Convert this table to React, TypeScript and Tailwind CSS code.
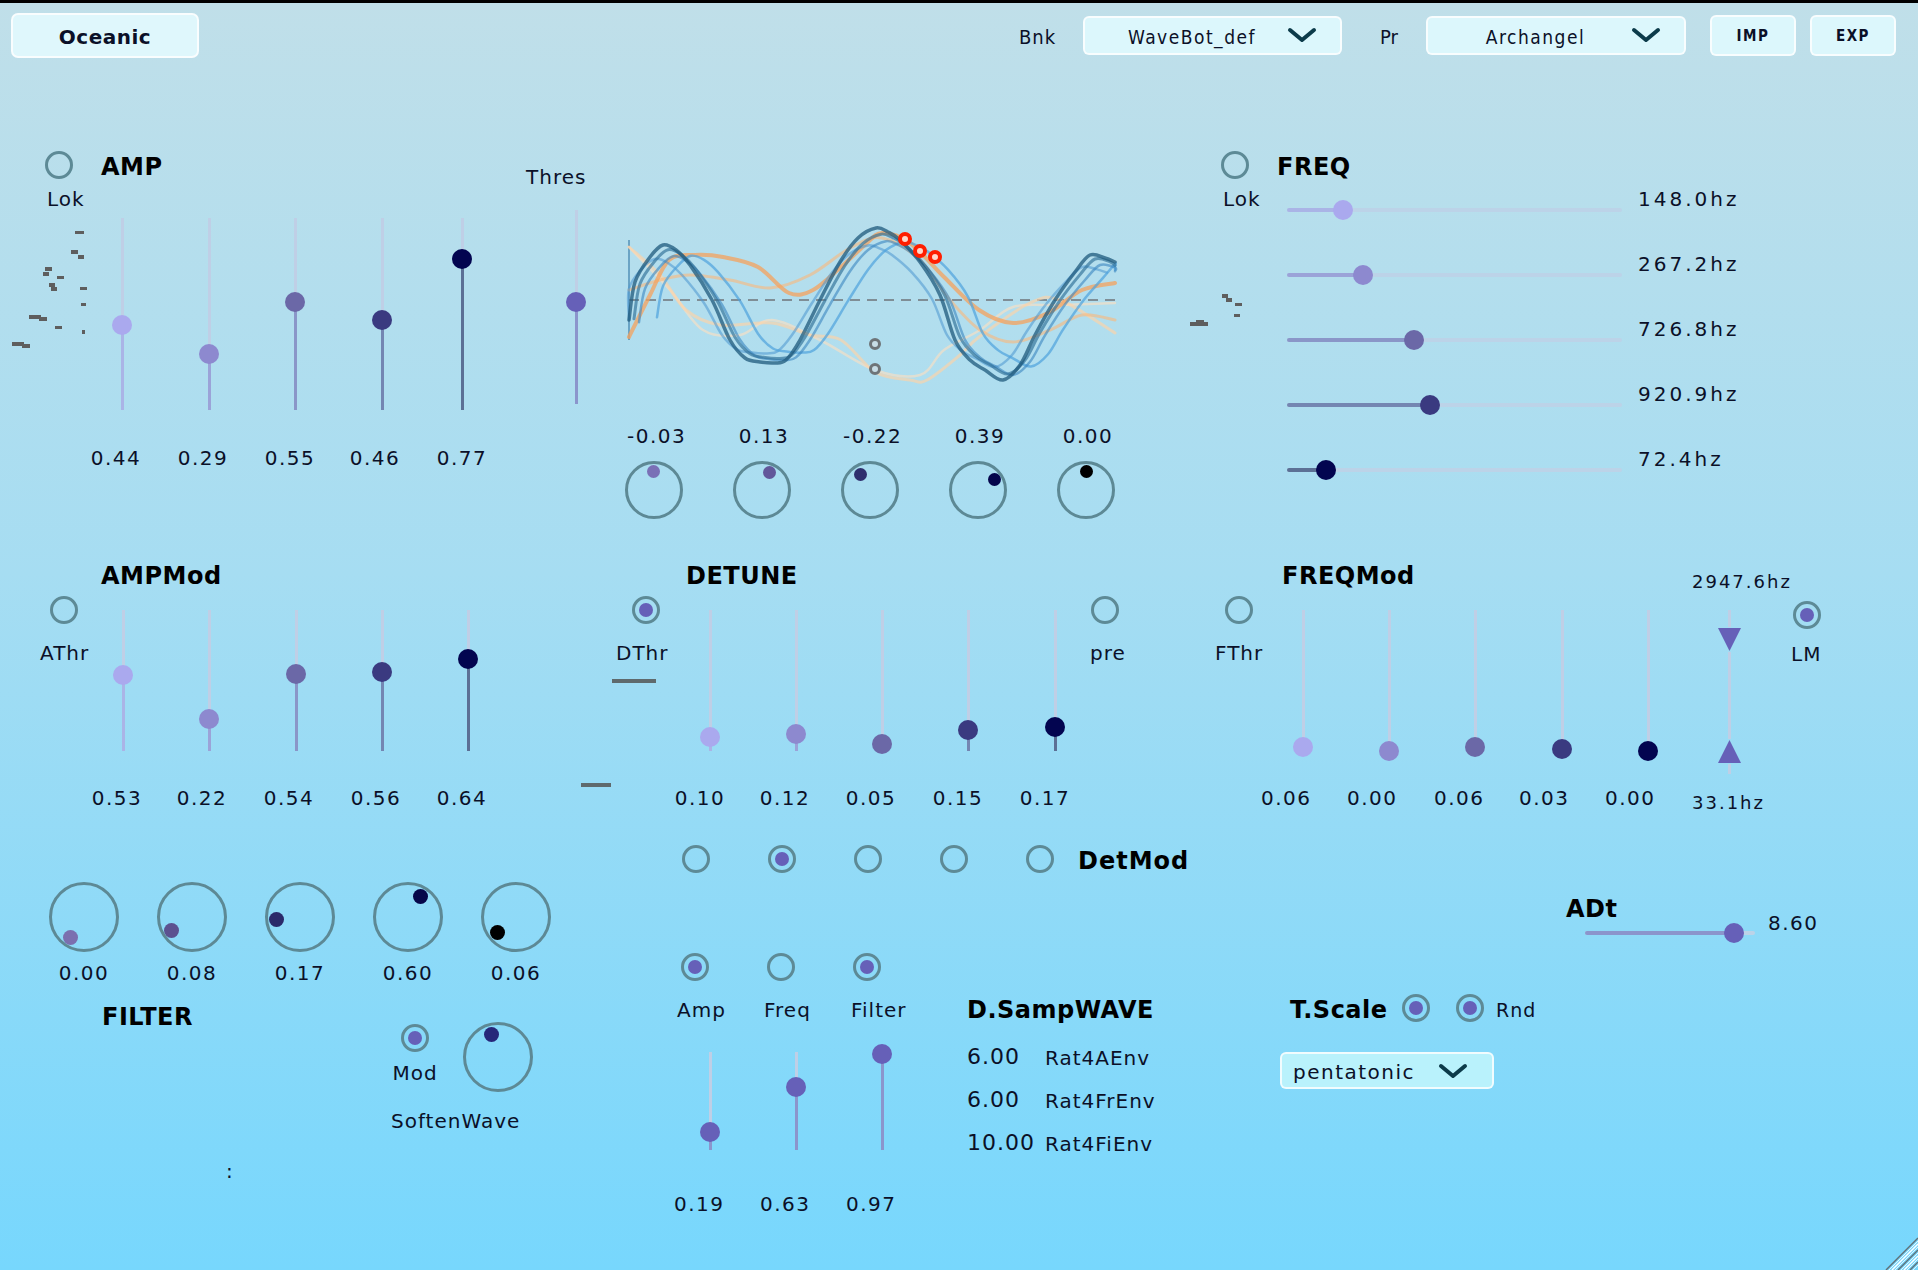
import React from 'react';

const LBL = 'relative top-[1px] text-[20px] leading-[24px] tracking-[1px] whitespace-nowrap';
const NUM = 'relative top-[1px] text-[20px] leading-[24px] tracking-[1.5px] whitespace-nowrap';
const HEAD = 'relative top-[2px] text-[24px] leading-[28px] font-bold text-black tracking-[0.5px] whitespace-nowrap';
const COND = "font-['DejaVu_Sans_Condensed','DejaVu_Sans',sans-serif]";

const THUMB = ['bg-[#aaa9ee]', 'bg-[#8d89cf]', 'bg-[#6b68a7]', 'bg-[#3a3a80]', 'bg-[#030550]'];
const FILL = ['bg-[#aab4e6]', 'bg-[#9ba3d8]', 'bg-[#8a96c8]', 'bg-[#7486b2]', 'bg-[#5c7095]'];

function Radio({ on = false, className = '' }: { on?: boolean; className?: string }) {
  return (
    <div className={`w-[28px] h-[28px] shrink-0 rounded-full border-[3px] border-[#5d8a96] flex items-center justify-center ${className}`}>
      {on && <div className="w-[14px] h-[14px] rounded-full bg-[#6660b8]" />}
    </div>
  );
}

function VSlider({ len, at, thumb = 'bg-[#6660b8]', fill = 'bg-[#8b95cc]', className = '' }: { len: number; at: number; thumb?: string; fill?: string; className?: string }) {
  return (
    <div className={`relative w-[20px] shrink-0 ${className}`} style={{ height: len }}>
      <div className="absolute left-[8.5px] top-0 w-[3px] h-full bg-[#bfcfe6]" />
      <div className={`absolute left-[8.5px] bottom-0 w-[3px] ${fill}`} style={{ height: Math.max(0, len - at) }} />
      <div className={`absolute left-0 w-[20px] h-[20px] rounded-full ${thumb}`} style={{ top: at - 10 }} />
    </div>
  );
}

function HSlider({ len, at, thumb = 'bg-[#6660b8]', fill = 'bg-[#8b95cc]', className = '' }: { len: number; at: number; thumb?: string; fill?: string; className?: string }) {
  return (
    <div className={`relative h-[20px] shrink-0 ${className}`} style={{ width: len }}>
      <div className="absolute top-[8px] left-0 h-[4px] w-full rounded-full bg-[#bcd3e8]" />
      <div className={`absolute top-[8px] left-0 h-[4px] rounded-full ${fill}`} style={{ width: at }} />
      <div className={`absolute top-0 w-[20px] h-[20px] rounded-full ${thumb}`} style={{ left: at - 10 }} />
    </div>
  );
}

function Knob({ big = false, dx, dy, dot, className = '' }: { big?: boolean; dx: number; dy: number; dot: string; className?: string }) {
  const size = big ? 70 : 58;
  const d = big ? 15 : 13;
  return (
    <div className={`relative shrink-0 rounded-full border-[3px] border-[#5d8995] ${big ? 'w-[70px] h-[70px]' : 'w-[58px] h-[58px]'} ${className}`}>
      <span
        className={`absolute rounded-full ${dot} ${big ? 'w-[15px] h-[15px]' : 'w-[13px] h-[13px]'}`}
        style={{ left: size / 2 - 3 + dx - d / 2, top: size / 2 - 3 + dy - d / 2 }}
      />
    </div>
  );
}

function Chevron() {
  return (
    <svg width="30" height="16" viewBox="0 0 30 16" className="shrink-0">
      <path d="M3 3 L15 13 L27 3" fill="none" stroke="#0c3b4a" strokeWidth="4" strokeLinecap="round" strokeLinejoin="round" />
    </svg>
  );
}

function Dropdown({ label, className = '' }: { label: string; className?: string }) {
  return (
    <div className={`h-[39px] rounded-[6px] bg-[#dcf7fc] border-2 border-white/80 flex items-center ${className}`}>
      <span className={`relative top-[2px] flex-1 text-center pl-[12px] text-[19px] tracking-[1.5px] ${COND}`}>{label}</span>
      <span className="mr-[23px]"><Chevron /></span>
    </div>
  );
}

function Btn({ children, className = '' }: { children: React.ReactNode; className?: string }) {
  return (
    <div className={`w-[86px] h-[41px] rounded-[6px] bg-[#dcf7fc] border-2 border-white/80 flex items-center justify-center text-[15px] font-bold tracking-[1.5px] ${COND} ${className}`}>
      <span className="relative top-[1px]">{children}</span>
    </div>
  );
}

function smooth(pts: number[][]) {
  let d = `M${pts[0][0]},${pts[0][1]}`;
  for (let i = 0; i < pts.length - 1; i++) {
    const p0 = pts[i - 1] || pts[i];
    const p1 = pts[i];
    const p2 = pts[i + 1];
    const p3 = pts[i + 2] || p2;
    const c1 = [p1[0] + (p2[0] - p0[0]) / 6, p1[1] + (p2[1] - p0[1]) / 6];
    const c2 = [p2[0] - (p3[0] - p1[0]) / 6, p2[1] - (p3[1] - p1[1]) / 6];
    d += ` C${c1[0].toFixed(1)},${c1[1].toFixed(1)} ${c2[0].toFixed(1)},${c2[1].toFixed(1)} ${p2[0]},${p2[1]}`;
  }
  return d;
}

const MAIN = [[9,100],[15,62],[30,37],[43,25],[56,30],[70,45],[92,80],[110,120],[125,138],[140,142],[155,143],[166,140],[180,120],[200,80],[220,42],[238,18],[256,8],[268,12],[280,20],[300,42],[320,75],[335,120],[350,140],[365,150],[383,160],[400,145],[415,115],[435,80],[455,52],[470,35],[485,38],[495,42]];

const BLUES = [
  { dx: -8, s: 0.8, dy: 2, c: '#4a96cf', w: 2.5, o: 0.55 },
  { dx: 28, s: 0.82, dy: 0, c: '#4fa2dd', w: 2.5, o: 0.7 },
  { dx: 10, s: 0.88, dy: 4, c: '#3a86c0', w: 2.5, o: 0.6 },
  { dx: 5, s: 0.92, dy: 0, c: '#2e6f96', w: 3, o: 0.65 },
  { dx: 0, s: 1, dy: 0, c: '#1f5a7c', w: 3.5, o: 0.75 },
];

const ORANGES = [
  { c: '#ffe0c0', w: 2.5, o: 0.6, p: [[9,27],[50,70],[83,110],[120,115],[152,100],[200,120],[255,150],[300,155],[324,130],[360,110],[393,87],[440,85],[495,83]] },
  { c: '#ffd3a6', w: 3, o: 0.65, p: [[9,27],[40,55],[66,90],[100,105],[152,103],[190,115],[221,120],[255,152],[290,160],[307,160],[340,135],[359,117],[410,83],[440,80],[495,113]] },
  { c: '#fbb77a', w: 3, o: 0.6, p: [[9,70],[40,60],[70,55],[110,60],[150,68],[190,55],[230,28],[262,18],[300,40],[330,80],[360,110],[393,122],[430,110],[462,95],[495,100]] },
  { c: '#f6a25c', w: 4, o: 0.75, p: [[9,117],[30,75],[49,40],[75,35],[103,37],[138,47],[169,73],[193,70],[221,47],[245,25],[262,13],[290,23],[324,57],[359,90],[393,103],[428,93],[462,70],[495,63]] },
];

function Wave({ className = '' }: { className?: string }) {
  return (
    <svg width="500" height="170" viewBox="0 0 500 170" className={className}>
      <line x1="9" y1="80" x2="495" y2="80" stroke="#7f8e96" strokeWidth="2" strokeDasharray="10 7" />
      <line x1="9" y1="20" x2="9" y2="120" stroke="#3b7eab" strokeWidth="2" opacity="0.6" />
      {ORANGES.map((l, i) => (
        <path key={'o' + i} d={smooth(l.p)} fill="none" stroke={l.c} strokeWidth={l.w} opacity={l.o} strokeLinecap="round" />
      ))}
      {BLUES.map((b, i) => {
        const pts = MAIN.map(([x, y]) => [Math.min(495, Math.max(9, x + b.dx)), +(85 + (y - 85) * b.s + b.dy).toFixed(1)]);
        return <path key={'b' + i} d={smooth(pts)} fill="none" stroke={b.c} strokeWidth={b.w} opacity={b.o} strokeLinecap="round" />;
      })}
      {[[285, 19], [300, 31], [315, 37]].map(([x, y], i) => (
        <circle key={'r' + i} cx={x} cy={y} r="5" fill="#ffd8cc" stroke="#ff1e00" strokeWidth="4" />
      ))}
      <circle cx="255" cy="124" r="4.5" fill="#c8dde6" stroke="#6e7478" strokeWidth="3" />
      <circle cx="255" cy="149" r="4.5" fill="#c8dde6" stroke="#6e7478" strokeWidth="3" />
    </svg>
  );
}

function Meter({ rects, w, h, className = '' }: { rects: number[][]; w: number; h: number; className?: string }) {
  return (
    <svg width={w} height={h} className={className}>
      {rects.map(([x, y, rw, rh], i) => (
        <rect key={i} x={x} y={y} width={rw} height={rh} fill="#5e5e5e" />
      ))}
    </svg>
  );
}

const AMP_METER = [[70,9,9,3],[66,28,7,4],[73,33,6,4],[40,45,7,4],[38,50,6,4],[52,54,7,3],[44,61,6,4],[46,65,6,4],[75,65,7,3],[76,81,5,3],[24,93,12,4],[34,95,8,4],[50,104,7,3],[77,108,3,4],[7,120,12,4],[17,122,8,4]];
const FREQ_METER = [[35,2,6,4],[39,6,6,4],[48,11,7,3],[47,22,6,3],[3,30,18,4],[9,28,8,3]];

function Tri({ up = false }: { up?: boolean }) {
  return (
    <svg width="25" height="25" viewBox="0 0 25 25" className="shrink-0">
      <polygon points={up ? '12.5,1 24,24 1,24' : '1,1 24,1 12.5,24'} fill="#6660b8" />
    </svg>
  );
}

function TopBar() {
  return (
    <div className="h-[64px] flex items-center pl-[11px] pr-[22px]">
      <div className="w-[188px] h-[45px] rounded-[7px] bg-[#dff7fc] border-2 border-white/80 flex items-center justify-center text-[20px] font-bold tracking-[0.5px]">
        <span className="relative top-[2px]">Oceanic</span>
      </div>
      <div className="ml-auto flex items-center">
        <span className={`relative top-[2px] w-[40px] text-[20px] tracking-[1px] ${COND}`}>Bnk</span>
        <Dropdown label="WaveBot_def" className="ml-[24px] w-[259px]" />
        <span className={`relative top-[2px] ml-[38px] w-[23px] text-[20px] ${COND}`}>Pr</span>
        <Dropdown label="Archangel" className="ml-[23px] w-[260px]" />
        <Btn className="ml-[24px]">IMP</Btn>
        <Btn className="ml-[14px]">EXP</Btn>
      </div>
    </div>
  );
}

function Row1() {
  const amp = [107, 136, 84, 102, 41];
  const ampMl = ['ml-[26px]', 'ml-[67px]', 'ml-[66px]', 'ml-[67px]', 'ml-[60px]'];
  const ampVals = ['0.44', '0.29', '0.55', '0.46', '0.77'];
  const valMl = ['ml-0', 'ml-[27px]', 'ml-[27px]', 'ml-[25px]', 'ml-[27px]'];
  const knobs = [
    { v: '-0.03', dx: -1, dy: -19, dot: 'bg-[#7a70b6]' },
    { v: '0.13', dx: 7, dy: -18, dot: 'bg-[#62579a]' },
    { v: '-0.22', dx: -10, dy: -16, dot: 'bg-[#2f2f6e]' },
    { v: '0.39', dx: 16, dy: -11, dot: 'bg-[#05064c]' },
    { v: '0.00', dx: 0, dy: -19, dot: 'bg-black' },
  ];
  const freq = [
    { at: 56, v: '148.0hz' },
    { at: 76, v: '267.2hz' },
    { at: 127, v: '726.8hz' },
    { at: 143, v: '920.9hz' },
    { at: 39, v: '72.4hz' },
  ];
  return (
    <div className="mt-[84px] h-[409px] flex items-start">
      {/* AMP */}
      <div className="w-[600px] shrink-0 flex items-start">
        <div className="w-[86px] shrink-0 flex flex-col items-start">
          <Radio className="ml-[45px]" />
          <span className={`ml-[47px] mt-[7px] ${LBL}`}>Lok</span>
          <Meter rects={AMP_METER} w={90} h={130} className="ml-[5px] mt-[12px]" />
        </div>
        <div className="w-[434px] shrink-0 flex flex-col items-start">
          <span className={`ml-[15px] ${HEAD}`}>AMP</span>
          <div className="mt-[39px] flex items-start">
            {amp.map((a, i) => (
              <VSlider key={i} len={192} at={a} thumb={THUMB[i]} fill={FILL[i]} className={ampMl[i]} />
            ))}
          </div>
          <div className="mt-[35px] flex">
            {ampVals.map((v, i) => (
              <span key={i} className={`w-[60px] text-center ${NUM} ${valMl[i]}`}>{v}</span>
            ))}
          </div>
        </div>
        <div className="flex flex-col items-start">
          <span className={`ml-[6px] mt-[13px] ${LBL}`}>Thres</span>
          <VSlider len={194} at={92} className="ml-[46px] mt-[22px]" />
        </div>
      </div>

      {/* Wave */}
      <div className="w-[580px] shrink-0 flex flex-col items-start">
        <Wave className="ml-[20px] mt-[69px]" />
        <div className="ml-[27px] mt-[33px] flex gap-[50px]">
          {knobs.map((k, i) => (
            <span key={i} className={`w-[58px] text-center ${NUM} text-[19px]`}>{k.v}</span>
          ))}
        </div>
        <div className="ml-[25px] mt-[14px] flex gap-[50px]">
          {knobs.map((k, i) => (
            <Knob key={i} dx={k.dx} dy={k.dy} dot={k.dot} />
          ))}
        </div>
      </div>

      {/* FREQ */}
      <div className="flex-1 flex flex-col items-start">
        <div className="flex items-center">
          <Radio className="ml-[41px]" />
          <span className={`ml-[28px] ${HEAD}`}>FREQ</span>
        </div>
        <div className="mt-[7px] flex items-start">
          <div className="w-[107px] shrink-0 flex flex-col items-start">
            <span className={`ml-[43px] ${LBL}`}>Lok</span>
            <Meter rects={FREQ_METER} w={56} h={36} className="ml-[7px] mt-[82px]" />
          </div>
          <div className="flex flex-col">
            {freq.map((f, i) => (
              <div key={i} className="h-[65px] flex items-start">
                <HSlider len={335} at={f.at} thumb={THUMB[i]} fill={FILL[i]} className="mt-[14px]" />
                <span className="relative top-[1px] ml-[16px] text-[20px] leading-[24px] tracking-[3px] whitespace-nowrap">{f.v}</span>
              </div>
            ))}
          </div>
        </div>
      </div>
    </div>
  );
}

function Row2() {
  const ampMod = [65, 109, 64, 62, 49];
  const ampModMl = ['ml-[27px]', 'ml-[66px]', 'ml-[67px]', 'ml-[66px]', 'ml-[66px]'];
  const ampModVals = ['0.53', '0.22', '0.54', '0.56', '0.64'];
  const ampModValMl = ['ml-[1px]', 'ml-[25px]', 'ml-[27px]', 'ml-[27px]', 'ml-[26px]'];

  const det = [127, 124, 134, 120, 117];
  const detMl = ['ml-[30px]', 'ml-[66px]', 'ml-[66px]', 'ml-[66px]', 'ml-[67px]'];
  const detVals = ['0.10', '0.12', '0.05', '0.15', '0.17'];
  const detValMl = ['ml-0', 'ml-[25px]', 'ml-[26px]', 'ml-[27px]', 'ml-[27px]'];

  const fm = [137, 141, 137, 139, 141];
  const fmMl = ['ml-[32px]', 'ml-[66px]', 'ml-[66px]', 'ml-[67px]', 'ml-[66px]'];
  const fmVals = ['0.06', '0.00', '0.06', '0.03', '0.00'];
  const fmValMl = ['ml-0', 'ml-[36px]', 'ml-[37px]', 'ml-[35px]', 'ml-[36px]'];

  return (
    <div className="h-[280px] flex items-start">
      {/* AMPMod */}
      <div className="w-[570px] shrink-0 flex items-start">
        <div className="w-[86px] shrink-0 flex flex-col items-start">
          <Radio className="ml-[50px] mt-[36px]" />
          <span className={`ml-[40px] mt-[16px] ${LBL}`}>AThr</span>
        </div>
        <div className="flex flex-col items-start">
          <span className={`ml-[15px] ${HEAD}`}>AMPMod</span>
          <div className="mt-[22px] flex items-start">
            {ampMod.map((a, i) => (
              <VSlider key={i} len={141} at={a} thumb={THUMB[i]} fill={FILL[i]} className={ampModMl[i]} />
            ))}
          </div>
          <div className="mt-[34px] flex">
            {ampModVals.map((v, i) => (
              <span key={i} className={`w-[60px] text-center ${NUM} ${ampModValMl[i]}`}>{v}</span>
            ))}
          </div>
        </div>
      </div>

      {/* DETUNE */}
      <div className="w-[620px] shrink-0 flex items-start">
        <div className="w-[100px] shrink-0 flex flex-col items-start">
          <Radio on className="ml-[62px] mt-[36px]" />
          <span className={`ml-[46px] mt-[16px] ${LBL}`}>DThr</span>
          <div className="ml-[42px] mt-[15px] w-[44px] h-[4px] bg-[#5f6a6d]" />
          <div className="ml-[11px] mt-[100px] w-[30px] h-[4px] bg-[#5f6a6d]" />
        </div>
        <div className="w-[420px] shrink-0 flex flex-col items-start">
          <span className={`ml-[16px] ${HEAD}`}>DETUNE</span>
          <div className="mt-[22px] flex items-start">
            {det.map((a, i) => (
              <VSlider key={i} len={141} at={a} thumb={THUMB[i]} fill={FILL[i]} className={detMl[i]} />
            ))}
          </div>
          <div className="mt-[34px] flex">
            {detVals.map((v, i) => (
              <span key={i} className={`w-[60px] text-center ${NUM} ${detValMl[i]}`}>{v}</span>
            ))}
          </div>
        </div>
        <div className="flex flex-col items-start">
          <Radio className="ml-[1px] mt-[36px]" />
          <span className={`mt-[16px] ${LBL}`}>pre</span>
        </div>
      </div>

      {/* FREQMod */}
      <div className="flex-1 flex items-start">
        <div className="w-[71px] shrink-0 flex flex-col items-start">
          <Radio className="ml-[35px] mt-[36px]" />
          <span className={`ml-[25px] mt-[16px] ${LBL}`}>FThr</span>
        </div>
        <div className="w-[420px] shrink-0 flex flex-col items-start">
          <span className={`ml-[21px] ${HEAD}`}>FREQMod</span>
          <div className="mt-[22px] flex items-start">
            {fm.map((a, i) => (
              <VSlider key={i} len={141} at={a} thumb={THUMB[i]} fill="bg-transparent" className={fmMl[i]} />
            ))}
          </div>
          <div className="mt-[34px] flex">
            {fmVals.map((v, i) => (
              <span key={i} className={`w-[50px] text-center ${NUM} ${fmValMl[i]}`}>{v}</span>
            ))}
          </div>
        </div>
        <div className="w-[96px] shrink-0 flex flex-col items-start">
          <span className="ml-[11px] mt-[11px] text-[18px] leading-[22px] tracking-[2px] whitespace-nowrap">2947.6hz</span>
          <div className="ml-[36px] mt-[17px] w-[25px] flex flex-col items-center">
            <div className="w-[3px] h-[17px] bg-[#bfcfe6]" />
            <Tri />
            <div className="w-[3px] h-[87px] bg-[#bfcfe6]" />
            <Tri up />
            <div className="w-[3px] h-[10px] bg-[#bfcfe6]" />
          </div>
          <span className="ml-[11px] mt-[18px] text-[18px] leading-[22px] tracking-[2px] whitespace-nowrap">33.1hz</span>
        </div>
        <div className="flex flex-col items-start">
          <Radio on className="ml-[16px] mt-[41px]" />
          <span className={`ml-[14px] mt-[12px] ${LBL}`}>LM</span>
        </div>
      </div>
    </div>
  );
}

function Row3() {
  const filt = [
    { v: '0.00', dx: -14, dy: 20, dot: 'bg-[#7b6faf]' },
    { v: '0.08', dx: -21, dy: 13, dot: 'bg-[#5c5290]' },
    { v: '0.17', dx: -24, dy: 2, dot: 'bg-[#2a2a6a]' },
    { v: '0.60', dx: 12, dy: -21, dot: 'bg-[#06074a]' },
    { v: '0.06', dx: -19, dy: 15, dot: 'bg-black' },
  ];
  const mods = [
    { on: true, label: 'Amp', lml: 'ml-[25px]', at: 80, v: '0.19' },
    { on: false, label: 'Freq', lml: 'ml-[26px]', at: 35, v: '0.63' },
    { on: true, label: 'Filter', lml: 'ml-[27px]', at: 2, v: '0.97' },
  ];
  const samp = [
    ['6.00', 'Rat4AEnv'],
    ['6.00', 'Rat4FrEnv'],
    ['10.00', 'Rat4FiEnv'],
  ];
  return (
    <div className="flex items-start">
      {/* FILTER */}
      <div className="w-[570px] shrink-0 flex flex-col items-start">
        <div className="ml-[49px] mt-[42px] flex gap-[38px]">
          {filt.map((k, i) => (
            <Knob key={i} big dx={k.dx} dy={k.dy} dot={k.dot} />
          ))}
        </div>
        <div className="ml-[49px] mt-[8px] flex gap-[38px]">
          {filt.map((k, i) => (
            <span key={i} className={`w-[70px] text-center ${NUM}`}>{k.v}</span>
          ))}
        </div>
        <div className="flex items-start">
          <span className={`ml-[102px] mt-[17px] w-[96px] ${HEAD}`}>FILTER</span>
          <div className="ml-[193px] mt-[38px] flex flex-col items-start">
            <div className="flex items-start">
              <div className="w-[48px] flex flex-col items-center">
                <Radio on className="mt-[2px]" />
                <span className={`mt-[8px] ${LBL}`}>Mod</span>
              </div>
              <Knob big dx={-7} dy={-23} dot="bg-[#26277a]" className="ml-[24px]" />
            </div>
            <span className={`mt-[16px] ${LBL}`}>SoftenWave</span>
          </div>
        </div>
        <span className={`ml-[226px] mt-[26px] ${LBL}`}>:</span>
      </div>

      {/* Mod section */}
      <div className="w-[620px] shrink-0 flex flex-col items-start">
        <div className="ml-[112px] mt-[5px] flex items-center">
          <div className="flex gap-[58px]">
            {[false, true, false, false, false].map((on, i) => (
              <Radio key={i} on={on} />
            ))}
          </div>
          <span className={`ml-[24px] ${HEAD} tracking-[1px]`}>DetMod</span>
        </div>
        <div className="flex items-start">
          <div className="ml-[82px] flex">
            {mods.map((m, i) => (
              <div key={i} className="w-[86px] flex flex-col items-start">
                <Radio on={m.on} className="ml-[29px] mt-[80px]" />
                <span className={`${m.lml} mt-[16px] ${LBL}`}>{m.label}</span>
                <VSlider len={98} at={m.at} className="ml-[48px] mt-[31px]" />
                <span className={`ml-[22px] mt-[41px] ${NUM}`}>{m.v}</span>
              </div>
            ))}
          </div>
          <div className="ml-[57px] mt-[121px] flex flex-col items-start">
            <span className={HEAD}>D.SampWAVE</span>
            <div className="mt-[23px] flex flex-col gap-[19px]">
              {samp.map(([n, l], i) => (
                <div key={i} className="flex items-center h-[24px]">
                  <span className="w-[78px] text-[22px] leading-[24px] tracking-[1px]">{n}</span>
                  <span className={`${LBL} tracking-[1.2px]`}>{l}</span>
                </div>
              ))}
            </div>
          </div>
        </div>
      </div>

      {/* Right */}
      <div className="flex-1 flex flex-col items-start">
        <div className="ml-[376px] mt-[53px] flex flex-col items-start">
          <span className={HEAD}>ADt</span>
          <div className="mt-[-11px] flex items-start">
            <HSlider len={170} at={149} className="ml-[19px] mt-[13px]" />
            <span className={`ml-[13px] ${NUM}`}>8.60</span>
          </div>
        </div>
        <div className="ml-[100px] mt-[51px] flex items-center">
          <span className={`w-[94px] ${HEAD}`}>T.Scale</span>
          <Radio on className="ml-[18px]" />
          <Radio on className="ml-[26px]" />
          <span className="ml-[12px] text-[19px] leading-[24px] tracking-[1px] mt-[4px]">Rnd</span>
        </div>
        <div className="ml-[90px] mt-[30px] w-[214px] h-[37px] rounded-[6px] bg-[#b9f2fc] border-2 border-white/80 flex items-center">
          <span className="relative top-[1px] pl-[11px] text-[20px] tracking-[1.5px]">pentatonic</span>
          <span className="ml-auto mr-[24px]"><Chevron /></span>
        </div>
      </div>
    </div>
  );
}

function Grip() {
  return (
    <svg width="36" height="36" viewBox="0 0 36 36" className="absolute right-0 bottom-0">
      {[4, 10, 16, 22, 28].map((o, i) => (
        <line key={i} x1={36} y1={o} x2={o} y2={36} stroke={i % 2 ? '#ffffff' : '#5f7178'} strokeWidth="1.5" />
      ))}
      {[7, 13, 19, 25, 31].map((o, i) => (
        <line key={'w' + i} x1={36} y1={o} x2={o} y2={36} stroke="#ffffff" strokeWidth="1" opacity="0.8" />
      ))}
    </svg>
  );
}

export default function App() {
  return (
    <div className="relative w-[1918px] h-[1270px] overflow-hidden border-t-[3px] border-black bg-[linear-gradient(180deg,#c0dfe9_0%,#a6ddf2_45%,#77d7fd_100%)] font-['DejaVu_Sans',sans-serif] text-[#0b1028]">
      <TopBar />
      <Row1 />
      <Row2 />
      <Row3 />
      <Grip />
    </div>
  );
}
